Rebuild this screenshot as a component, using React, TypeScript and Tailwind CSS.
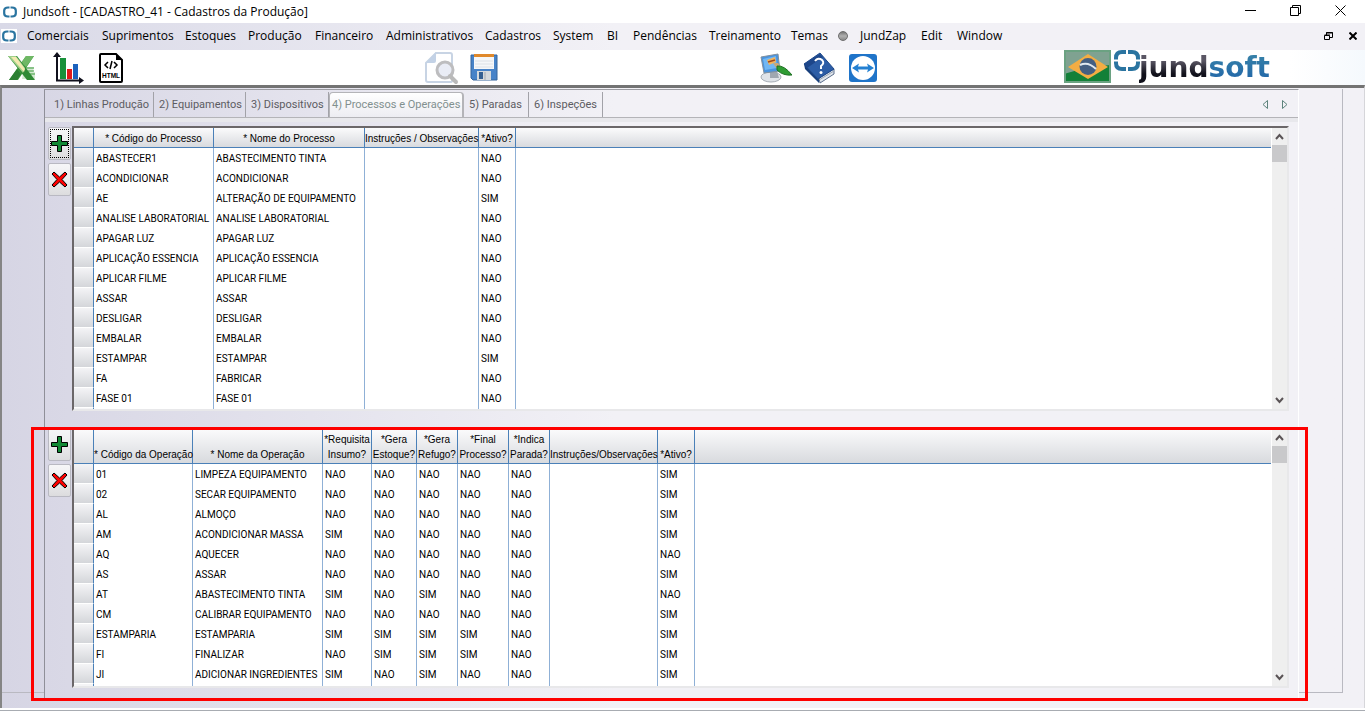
import React from "react";

const MENU: [string, string][] = [
  ["Comerciais", "w-[75px]"],
  ["Suprimentos", "w-[83px]"],
  ["Estoques", "w-[63px]"],
  ["Produção", "w-[67px]"],
  ["Financeiro", "w-[71px]"],
  ["Administrativos", "w-[99px]"],
  ["Cadastros", "w-[68px]"],
  ["System", "w-[54px]"],
  ["BI", "w-[26px]"],
  ["Pendências", "w-[76px]"],
  ["Treinamento", "w-[82px]"],
  ["Temas", "w-[47px]"],
];

const MENU_END: [string, string][] = [
  ["JundZap", "w-[61px]"],
  ["Edit", "w-[36px]"],
  ["Window", "w-[60px]"],
];

const TABS: [string, string][] = [
  ["1) Linhas Produção", "w-[109px]"],
  ["2) Equipamentos", "w-[92px]"],
  ["3) Dispositivos", "w-[83px]"],
  ["4) Processos e Operações", "w-[135px]"],
  ["5) Paradas", "w-[65px]"],
  ["6) Inspeções", "w-[74px]"],
];

const PROCESS_COLS: [string, string][] = [
  ["* Código do Processo", "w-[120px]"],
  ["* Nome do Processo", "w-[151px]"],
  ["Instruções / Observações", "w-[114px]"],
  ["*Ativo?", "w-[37px]"],
];

const PROCESSES = [
  ["ABASTECER1", "ABASTECIMENTO TINTA", "", "NAO"],
  ["ACONDICIONAR", "ACONDICIONAR", "", "NAO"],
  ["AE", "ALTERAÇÃO DE EQUIPAMENTO", "", "SIM"],
  ["ANALISE LABORATORIAL", "ANALISE LABORATORIAL", "", "NAO"],
  ["APAGAR LUZ", "APAGAR LUZ", "", "NAO"],
  ["APLICAÇÃO ESSENCIA", "APLICAÇÃO ESSENCIA", "", "NAO"],
  ["APLICAR FILME", "APLICAR FILME", "", "NAO"],
  ["ASSAR", "ASSAR", "", "NAO"],
  ["DESLIGAR", "DESLIGAR", "", "NAO"],
  ["EMBALAR", "EMBALAR", "", "NAO"],
  ["ESTAMPAR", "ESTAMPAR", "", "SIM"],
  ["FA", "FABRICAR", "", "NAO"],
  ["FASE 01", "FASE 01", "", "NAO"],
];

const OPERATION_COLS: [string, string][] = [
  ["* Código da Operação", "w-[99px]"],
  ["* Nome da Operação", "w-[130px]"],
  ["*Requisita\nInsumo?", "w-[49px]"],
  ["*Gera\nEstoque?", "w-[45px]"],
  ["*Gera\nRefugo?", "w-[41px]"],
  ["*Final\nProcesso?", "w-[51px]"],
  ["*Indica\nParada?", "w-[41px]"],
  ["Instruções/Observações", "w-[108px]"],
  ["*Ativo?", "w-[37px]"],
];

const OPERATIONS = [
  ["01", "LIMPEZA EQUIPAMENTO", "NAO", "NAO", "NAO", "NAO", "NAO", "", "SIM"],
  ["02", "SECAR EQUIPAMENTO", "NAO", "NAO", "NAO", "NAO", "NAO", "", "SIM"],
  ["AL", "ALMOÇO", "NAO", "NAO", "NAO", "NAO", "NAO", "", "SIM"],
  ["AM", "ACONDICIONAR MASSA", "SIM", "NAO", "NAO", "NAO", "NAO", "", "SIM"],
  ["AQ", "AQUECER", "NAO", "NAO", "NAO", "NAO", "NAO", "", "NAO"],
  ["AS", "ASSAR", "NAO", "NAO", "NAO", "NAO", "NAO", "", "SIM"],
  ["AT", "ABASTECIMENTO TINTA", "SIM", "NAO", "SIM", "NAO", "NAO", "", "NAO"],
  ["CM", "CALIBRAR EQUIPAMENTO", "NAO", "NAO", "NAO", "NAO", "NAO", "", "SIM"],
  ["ESTAMPARIA", "ESTAMPARIA", "SIM", "SIM", "SIM", "SIM", "NAO", "", "SIM"],
  ["FI", "FINALIZAR", "NAO", "SIM", "SIM", "SIM", "NAO", "", "SIM"],
  ["JI", "ADICIONAR INGREDIENTES", "SIM", "NAO", "SIM", "NAO", "NAO", "", "SIM"],
];

function BrandMark({ className }: { className: string }) {
  return (
    <svg viewBox="0 0 26 21" className={className} fill="none" stroke="#2a74a0" strokeWidth="4" aria-hidden="true">
      <path d="M2 9.500V8Q2 2 8 2H12M14 2H18Q24 2 24 8V9.500M24 11.500V13Q24 19 18 19H14M12 19H8Q2 19 2 13V11.500" />
    </svg>
  );
}

function BrandIcon() {
  return (
    <svg viewBox="0 0 14 12" className="h-3 w-[14px]" fill="none" stroke="#2a74a0" strokeWidth="2.200" aria-hidden="true">
      <path d="M6.500 1.500H5Q1.200 1.500 1.200 4.500V7.500Q1.200 10.500 5 10.500H6.500M7.500 1.500H9Q12.800 1.500 12.800 4.500V7.500Q12.800 10.500 9 10.500H7.500" />
    </svg>
  );
}

function ExcelIcon() {
  return (
    <svg viewBox="0 0 28 26" className="h-[26px] w-7" aria-hidden="true">
      <path d="M16 12H26L25 17H27V24H14z" fill="#d3ead0" />
      <path d="M18 1h8L10 25H1z" fill="#3d9a3f" />
      <path d="M18 1h8l-8 11-5-4z" fill="#6fb865" />
      <path d="M0 1h9l18 24h-8z" fill="#2f8a35" />
      <path d="M0 1h8l9 12-2 5z" fill="#9fd08a" />
      <path d="M3 2h5l9 12-1 3z" fill="#f3e9b0" />
      <path d="M18 13h8M20 16h6M22 19h5" stroke="#3d9a3f" strokeWidth="1" />
      <path d="M1 25l8-11 4 5-4 6z" fill="#2c7f33" />
    </svg>
  );
}

function ChartIcon() {
  return (
    <svg viewBox="0 0 32 32" className="size-8" aria-hidden="true">
      <rect x="7" y="6" width="6" height="21" fill="#18913a" />
      <rect x="14" y="17" width="5" height="10" fill="#e01b1b" />
      <rect x="20" y="12" width="5" height="15" fill="#1b62bd" />
      <path d="M4 3V28.500H28" stroke="#10101c" strokeWidth="2" fill="none" />
      <path d="M4 0L8 5H0zM31 28.500L26 25v7z" fill="#10101c" />
    </svg>
  );
}

function HtmlIcon() {
  return (
    <svg viewBox="0 0 24 30" className="h-[30px] w-6" aria-hidden="true">
      <path d="M2 1H17L23 7V28Q23 29 22 29H2Q1 29 1 28V2Q1 1 2 1z" fill="#fff" stroke="#000" strokeWidth="2" />
      <path d="M17 1V7H23z" fill="#000" />
      <path d="M9 9L6 12L9 15M15 9L18 12L15 15M13 8L11 16" stroke="#000" strokeWidth="1.500" fill="none" />
      <text x="12" y="25" textAnchor="middle" fontSize="6.500" fontWeight="700" fontFamily="Liberation Sans, sans-serif">HTML</text>
    </svg>
  );
}

function PreviewIcon() {
  return (
    <svg viewBox="0 0 34 34" className="size-[34px]" aria-hidden="true">
      <path d="M11 2H25Q27 2 27 4V30Q27 31 25 31H3Q1 31 1 29V12z" fill="#fff" stroke="#c8d4e4" strokeWidth="2" />
      <path d="M1 12L11 1V10Q11 12 9 12z" fill="#c3d2e6" />
      <circle cx="20" cy="19" r="8" fill="#e9ecf5" stroke="#bdbdbf" strokeWidth="3" />
      <path d="M25 25L31 31" stroke="#bababa" strokeWidth="4" strokeLinecap="round" />
    </svg>
  );
}

function SaveIcon() {
  return (
    <svg viewBox="0 0 28 28" className="size-7" aria-hidden="true">
      <path d="M1 1H27V26H3L1 24z" fill="#4783c8" stroke="#34649c" />
      <rect x="4" y="1" width="20" height="14" fill="#f5f7f9" />
      <rect x="4" y="0" width="20" height="3" fill="#e0892b" />
      <path d="M5 7H23M5 10H23M5 13H23" stroke="#dde1e6" />
      <rect x="7" y="17" width="14" height="9" fill="#d5d9dc" />
      <rect x="9" y="18" width="4" height="7" fill="#345f91" />
      <path d="M15 18V26" stroke="#a5aab0" />
    </svg>
  );
}

function ThemeIcon() {
  return (
    <svg viewBox="0 0 32 30" className="h-[30px] w-8" aria-hidden="true">
      <ellipse cx="11" cy="24" rx="10" ry="5" fill="#dfe3e8" stroke="#a6adb5" />
      <path d="M10 18h7l2 7h-9z" fill="#9fa7b0" />
      <path d="M1 4L18 1L20 18L4 20z" fill="#4a93de" stroke="#80909f" />
      <path d="M3 6L16 3L17 15L5 17z" fill="#71b7f3" />
      <path d="M7 7L15 4L16 9L9 12z" fill="#f4b35b" />
      <path d="M8 9L15 7" stroke="#9e4a1e" strokeWidth="1.500" />
      <path d="M13 10L18 10L22 15L17 16z" fill="#c9a878" />
      <path d="M17 13Q24 12 32 22Q23 23 17 17z" fill="#2f9c33" stroke="#1d7023" />
    </svg>
  );
}

function HelpBookIcon() {
  return (
    <svg viewBox="0 0 32 32" className="size-8" aria-hidden="true">
      <path d="M1 12L16 27V31L2 17z" fill="#173f7c" />
      <path d="M16 26L31 17V22L17 31z" fill="#dfe4ea" stroke="#5c6f8c" />
      <path d="M16 28L31 19" stroke="#9aa6b5" />
      <path d="M17 1L31 17L15 27L1 12z" fill="#2c5da6" stroke="#1e488a" />
      <path d="M17 2L20 5L4 16L1 12z" fill="#1d468a" />
      <path d="M12 9Q15 5 19 8Q22 11 18 14L18 17" stroke="#fff" strokeWidth="2" fill="none" />
      <circle cx="18" cy="20.500" r="1.500" fill="#fff" />
    </svg>
  );
}

function RemoteIcon() {
  return (
    <svg viewBox="0 0 28 28" className="size-7" aria-hidden="true">
      <rect width="28" height="28" rx="3" fill="#1f74c9" />
      <circle cx="14" cy="14" r="12" fill="#fff" />
      <path d="M3 14L10 9.500L9 12.500H19L18 9.500L25 14L18 18.500L19 15.500H9L10 18.500z" fill="#2380d2" />
    </svg>
  );
}

function FlagIcon() {
  return (
    <svg viewBox="0 0 47 33" className="h-[33px] w-[47px]" aria-label="Brasil" role="img">
      <rect width="47" height="33" fill="#128038" />
      <path d="M0 0H47V15Q24 16 0 24z" fill="#7fa291" />
      <rect x="1" y="1" width="45" height="31" fill="none" stroke="#6ba282" strokeWidth="2" />
      <path d="M4 17L24 4L44 17L24 29z" fill="#f3ad43" />
      <circle cx="24" cy="16.500" r="8.500" fill="#455f82" />
      <path d="M16 15Q24 11 32 19" stroke="#e1e8ef" strokeWidth="2" fill="none" />
    </svg>
  );
}

function AddIcon() {
  return (
    <svg viewBox="0 0 17 17" className="size-[17px]" aria-hidden="true">
      <path d="M6.500 .5H10.500V6.500H16.500V10.500H10.500V16.500H6.500V10.500H.5V6.500H6.500z" fill="#118a35" stroke="#000" />
    </svg>
  );
}

function RemoveIcon() {
  return (
    <svg viewBox="0 0 17 17" className="size-[17px]" aria-hidden="true">
      <path d="M3 1L8.500 6L14 1L16 3L11 8.500L16 14L14 16L8.500 11L3 16L1 14L6 8.500L1 3z" fill="#f00" stroke="#000" strokeWidth="1" />
    </svg>
  );
}

function EditButtons({ focused = false }: { focused?: boolean }) {
  const box =
    "flex h-[33px] w-[23px] items-center justify-center rounded-[2px] border border-[#b9b9c2] bg-linear-to-b from-[#f6f6f8] via-[#ececee] via-50% to-[#dcdcde]";
  return (
    <div className="flex w-[24px] shrink-0 flex-col gap-[3px] pt-px">
      <button type="button" aria-label="Adicionar" className={box}>
        <span className={focused ? "flex h-[29px] w-[19px] items-center justify-center border border-dotted border-black" : ""}>
          <AddIcon />
        </span>
      </button>
      <button type="button" aria-label="Remover" className={box}>
        <RemoveIcon />
      </button>
    </div>
  );
}

function Scrollbar() {
  return (
    <div className="ml-px flex w-[15px] shrink-0 flex-col bg-[#efefef]">
      <button type="button" aria-label="Rolar para cima" className="flex h-[17px] items-center justify-center">
        <svg viewBox="0 0 9 7" className="h-[7px] w-[9px]" fill="none" stroke="#5a5456" strokeWidth="2" aria-hidden="true">
          <path d="M1 6L4.500 2L8 6" />
        </svg>
      </button>
      <div className="h-[17px] bg-[#c9c9cb]" />
      <div className="flex-1" />
      <button type="button" aria-label="Rolar para baixo" className="flex h-[17px] items-center justify-center">
        <svg viewBox="0 0 9 7" className="h-[7px] w-[9px]" fill="none" stroke="#5a5456" strokeWidth="2" aria-hidden="true">
          <path d="M1 1L4.500 5L8 1" />
        </svg>
      </button>
    </div>
  );
}

function Grid({
  label,
  cols,
  rows,
  headClass,
  restClass,
}: {
  label: string;
  cols: [string, string][];
  rows: string[][];
  headClass: string;
  restClass: string;
}) {
  const head =
    "border-b border-[#4a80b8] bg-linear-to-b from-[#fbfbfc] to-[#d8dade] p-0 pb-px align-bottom font-['Liberation_Sans',sans-serif] font-normal whitespace-pre text-center leading-[15px]";
  const selector =
    "border-r border-b border-r-[#4a80b8] border-b-white bg-linear-to-b from-[#f4f4f6] to-[#d4d6da] p-0";
  return (
    <div className="flex min-w-0 flex-1 border-2 border-t-[#6b6769] border-r-[#e8e8ea] border-b-[#e8e8ea] border-l-[#6b6769] bg-white">
      <div className="min-w-0 flex-1">
        <table
          aria-label={label}
          className="w-full table-fixed border-separate border-spacing-0 font-['Roboto','Liberation_Sans',sans-serif] text-[10px] text-black"
        >
          <colgroup>
            <col className="w-[20px]" />
            {cols.map(([name, w]) => (
              <col key={name} className={w} />
            ))}
            <col />
          </colgroup>
          <thead>
            <tr className={headClass}>
              <th className={head + " border-r"} />
              {cols.map(([name]) => (
                <th key={name} scope="col" className={head + " border-r"}>
                  {name}
                </th>
              ))}
              <th className={head} />
            </tr>
          </thead>
          <tbody>
            {rows.map((row) => (
              <tr key={row[0]} className="h-5">
                <td className={selector} />
                {row.map((cell, i) => (
                  <td key={i} className="border-r border-[#8fb0d6] p-0 pl-[2px] leading-[19px] whitespace-nowrap">
                    {cell}
                  </td>
                ))}
                <td className="p-0" />
              </tr>
            ))}
            <tr className={restClass}>
              <td className="border-r border-[#4a80b8] bg-[#f4f4f6] p-0" />
              {cols.map(([name]) => (
                <td key={name} className="border-r border-[#8fb0d6] p-0" />
              ))}
              <td className="p-0" />
            </tr>
          </tbody>
        </table>
      </div>
      <Scrollbar />
    </div>
  );
}

export default function App() {
  return (
    <div className="flex w-full flex-col overflow-hidden bg-white font-['Open_Sans','Noto_Sans',sans-serif] text-[12px] text-black">
      <header>
        <div className="flex h-[23px] items-center pr-[19px] pl-[3px]">
          <BrandIcon />
          <h1 className="ml-[6px] flex-1 text-[12px] font-normal">Jundsoft - [CADASTRO_41 - Cadastros da Produção]</h1>
          <div className="flex items-center gap-[34px] pb-[2px]">
            <button type="button" aria-label="Minimizar">
              <svg viewBox="0 0 11 11" className="size-[11px]" stroke="#000"><path d="M0 5.500H11" /></svg>
            </button>
            <button type="button" aria-label="Restaurar">
              <svg viewBox="0 0 11 11" className="size-[11px]" fill="none" stroke="#000"><path d="M.5 2.500H8.500V10.500H.5zM2.500 2.500V.5H10.500V8.500H8.500" /></svg>
            </button>
            <button type="button" aria-label="Fechar">
              <svg viewBox="0 0 11 11" className="size-[11px]" stroke="#000"><path d="M.5 .5L10.500 10.500M10.500 .5L.5 10.500" /></svg>
            </button>
          </div>
        </div>

        <nav className="flex h-[27px] items-center bg-linear-to-r from-[#d9d9e7] to-[#f2f1f6] to-45% pr-2 pb-[2px]">
          <span className="mr-[10px] ml-px flex h-[14px] w-4 items-center justify-center bg-white">
            <BrandIcon />
          </span>
          {MENU.map(([name, w]) => (
            <button key={name} type="button" className={"shrink-0 text-left whitespace-nowrap " + w}>
              {name}
            </button>
          ))}
          <span className="mr-3 flex size-[10px] shrink-0 rounded-full border border-[#6d6d6d] bg-linear-to-b from-[#777] via-[#b0b0b0] to-[#8a8a8a]" />
          {MENU_END.map(([name, w]) => (
            <button key={name} type="button" className={"shrink-0 text-left whitespace-nowrap " + w}>
              {name}
            </button>
          ))}
          <div className="ml-auto flex items-center gap-4">
            <button type="button" aria-label="Restaurar janela">
              <svg viewBox="0 0 9 8" className="h-2 w-[9px]" fill="none" stroke="#000"><path d="M.5 3.500H5.500V7.500H.5zM.5 3H6M2.500 3V.5H8.500V5.500H6M2 1H9" /></svg>
            </button>
            <button type="button" aria-label="Fechar janela">
              <svg viewBox="0 0 8 8" className="size-2" stroke="#000" strokeWidth="2"><path d="M.5 .5L7.500 7.500M7.500 .5L.5 7.500" /></svg>
            </button>
          </div>
        </nav>

        <div className="flex h-[35px] items-center pl-2">
          <button type="button" aria-label="Excel" className="w-[45px]"><ExcelIcon /></button>
          <button type="button" aria-label="Gráfico" className="w-[46px]"><ChartIcon /></button>
          <button type="button" aria-label="HTML" className="w-[326px]"><HtmlIcon /></button>
          <button type="button" aria-label="Visualizar" className="w-[45px]"><PreviewIcon /></button>
          <button type="button" aria-label="Salvar" className="w-[290px]"><SaveIcon /></button>
          <button type="button" aria-label="Temas" className="w-[43px]"><ThemeIcon /></button>
          <button type="button" aria-label="Ajuda" className="w-[46px]"><HelpBookIcon /></button>
          <button type="button" aria-label="Acesso remoto"><RemoteIcon /></button>
          <div className="ml-auto flex w-[301px] items-start bg-linear-to-r from-white from-75% to-[#f5f9fd]">
            <FlagIcon />
            <BrandMark className="ml-[3px] h-[21px] w-[26px]" />
            <span className="-ml-px font-['DejaVu_Sans',sans-serif] text-[28px] leading-[35px] font-bold">
              <span className="bg-linear-to-b from-[#5a5664] from-30% to-[#11111b] to-70% bg-clip-text text-transparent">jund</span>
              <span className="bg-linear-to-b from-[#3a85a8] to-[#1f62a8] bg-clip-text text-transparent">soft</span>
            </span>
          </div>
        </div>
      </header>

      <main className="flex border-t-3 border-r border-l-2 border-t-[#737373] border-r-[#d6d6da] border-l-[#858585] bg-linear-to-r from-[#d6d5e4] to-[#f2f1f6] to-45% pt-px pb-[9px]">
        <div className="mb-[6px] w-[42px] shrink-0 border-b border-[#b9b9c1]" />

        <section className="min-w-0 flex-1 border-t border-r border-l border-t-[#9c9ca2] border-r-white border-l-[#8f8f98] pb-[11px]">
          <div className="flex items-end border-b border-[#b4b4b8] pt-[2px] font-['Roboto','Liberation_Sans',sans-serif] text-[11px] text-[#5c5c62]">
            <div role="tablist" className="flex h-[25px] items-stretch">
              {TABS.map(([name, w], i) => (
                <button
                  key={name}
                  type="button"
                  role="tab"
                  aria-selected={i === 3}
                  className={
                    (i === 3
                      ? "rounded-t-[4px] border border-r-2 border-b-0 border-[#b4b4b8] bg-linear-to-b from-white to-[#ededf2] pt-px pl-[2px] text-[#82908f] "
                      : "border-r border-[#a2a2a8] pt-[2px] pl-[5px] first:pl-[9px] ") +
                    "text-left whitespace-nowrap " +
                    w
                  }
                >
                  {name}
                </button>
              ))}
            </div>
            <div className="ml-auto flex items-center gap-[14px] pr-[10px] pb-2">
              <button type="button" aria-label="Aba anterior">
                <svg viewBox="0 0 6 9" className="h-[9px] w-[6px]" fill="none" stroke="#5d837c"><path d="M5.500 .5V8.500L1 4.500z" /></svg>
              </button>
              <button type="button" aria-label="Próxima aba">
                <svg viewBox="0 0 6 9" className="h-[9px] w-[6px]" fill="none" stroke="#5d837c"><path d="M.5 .5V8.500L5 4.500z" /></svg>
              </button>
            </div>
          </div>
          <div className="h-1 bg-[#e8e8ec]" />

          <div className="flex flex-col gap-4 pt-1">
            <div className="flex pr-[9px] pl-[3px]">
              <EditButtons focused />
              <Grid label="Processos" cols={PROCESS_COLS} rows={PROCESSES} headClass="h-5" restClass="h-px" />
            </div>

            <div className="relative flex pr-[9px] pl-[3px]">
              <EditButtons />
              <Grid label="Operações" cols={OPERATION_COLS} rows={OPERATIONS} headClass="h-[35px]" restClass="h-[2px]" />
              <div className="pointer-events-none absolute top-0 -right-[10px] -bottom-[13px] -left-[14px] border-3 border-[#fe0000]" />
            </div>
          </div>
        </section>

        <div className="mb-[6px] w-[44px] shrink-0 border-r border-b border-[#b9b9c1]" />
        <div className="w-[21px] shrink-0" />
      </main>

      <footer className="h-1 border-b-2 border-[#a8acb2] bg-white" />
    </div>
  );
}
